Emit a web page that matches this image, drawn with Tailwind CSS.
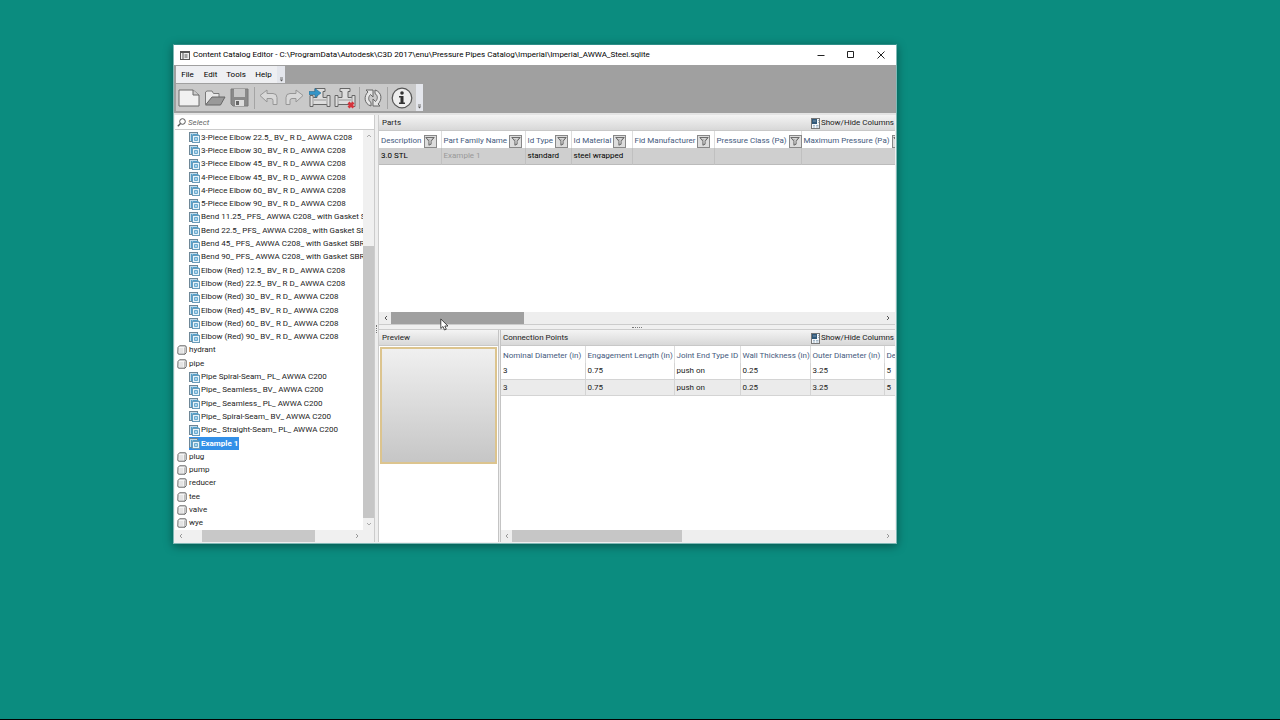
<!DOCTYPE html>
<html lang="en">
<head>
<meta charset="utf-8">
<meta name="viewport" content="width=device-width, initial-scale=1">
<title>Content Catalog Editor</title>
<script src="https://cdn.jsdelivr.net/npm/@tailwindcss/browser@4"></script>
</head>
<body class="relative min-h-screen overflow-hidden border-b border-black bg-[#0b8c7f] font-[Roboto,'Open_Sans',sans-serif] text-[8px] leading-3 text-[#222]">
<svg class="hidden" aria-hidden="true">
  <symbol id="part" viewBox="0 0 11 11"><rect x="0.5" y="0.5" width="8" height="9" fill="#c4dbe9" stroke="#6e8797"/><path d="M2.5 2v7M3.5 2.5h6" stroke="#53a0cb" fill="none"/><rect x="3.5" y="3.5" width="7" height="7" fill="#e8f4fb" stroke="#6a9cba"/><path d="M5.5 5.500h3v3h-3z" fill="#a9d6ee" stroke="#6dabcf"/></symbol>
  <symbol id="cube" viewBox="0 0 10 10"><path d="M1 2.500 2.500.800h5.500q1.200 0 1.200 1.200v5.500L8 9.200H2Q.800 9.200.800 8z" fill="#f5f5f5" stroke="#555" stroke-width=".9"/><path d="M7.500 2.500V9" fill="none" stroke="#888" stroke-width=".5"/><path d="M2.200 3h4v5h-4z" fill="#e4e4e4"/></symbol>
  <symbol id="funnel" viewBox="0 0 10 10"><path d="M.8 1.500h8.400L6.100 5.200v3L3.900 9.200v-4z" fill="#b4b4b4" stroke="#626262" stroke-width=".9"/><path d="M2.500 2.500h4L5 4.500v3" fill="none" stroke="#eee" stroke-width=".6"/></symbol>
  <symbol id="columns" viewBox="0 0 9 11"><rect x=".5" y=".5" width="8" height="10" fill="#f4f7fa" stroke="#777"/><rect x="1" y="1" width="5" height="5" fill="#31597a"/><path d="M2 3h3M2 7.500h2M5 7.500h2.500M2 9h2M5 9h2.500M7 2.500h1M7 4.500h1" stroke="#8aa4ba" stroke-width=".8"/></symbol>
  <symbol id="left" viewBox="0 0 6 6"><path d="M4 1 2 3l2 2" fill="none" stroke="currentColor"/></symbol>
  <symbol id="right" viewBox="0 0 6 6"><path d="m2 1 2 2-2 2" fill="none" stroke="currentColor"/></symbol>
  <symbol id="up" viewBox="0 0 6 6"><path d="m1 4 2-2 2 2" fill="none" stroke="currentColor"/></symbol>
  <symbol id="down" viewBox="0 0 6 6"><path d="m1 2 2 2 2-2" fill="none" stroke="currentColor"/></symbol>
  <symbol id="more" viewBox="0 0 5 5"><path d="M1 1h3" stroke="#555" stroke-width=".8"/><path d="M.8 2.500h3.400L2.500 4.500z" fill="#555"/></symbol>
  <symbol id="tee" viewBox="0 0 22 22"><path d="M6 1.500h10v3h-2v6H18V8.500h3v11h-3v-2H4v2H1v-11h3v2h4v-6H6z" fill="#ddd" stroke="#666"/><path d="M4 10.500v7M18 10.500v7M5 13h12" stroke="#999" fill="none"/></symbol>
</svg>

<main class="absolute left-[173px] top-[44px] flex h-[500px] w-[724px] flex-col border border-[#7fb9b6] border-t-[#2f8e88] bg-white shadow-[0_2px_9px_rgba(0,0,0,0.4)]">
  <header class="flex h-[20px] shrink-0 items-center bg-white pl-[6px]">
    <svg class="h-[9px] w-[10px]" viewBox="0 0 10 9"><rect x=".5" y=".5" width="9" height="8" fill="#eee" stroke="#555"/><path d="M0 1.500h10M3 2v7M4.500 4h3M4.500 6h3" stroke="#555"/></svg>
    <h1 class="ml-[3px] whitespace-nowrap text-black">Content Catalog Editor - C:\ProgramData\Autodesk\C3D 2017\enu\Pressure Pipes Catalog\Imperial\Imperial_AWWA_Steel.sqlite</h1>
    <div class="ml-auto flex h-full">
      <button aria-label="Minimize" class="flex w-[30px] items-center justify-center"><svg class="size-[8px]" viewBox="0 0 8 8"><path d="M.5 4.500h7" stroke="#222"/></svg></button>
      <button aria-label="Maximize" class="flex w-[30px] items-center justify-center"><svg class="size-[8px]" viewBox="0 0 8 8"><path d="M.5 .5h6v6h-6z" fill="none" stroke="#222"/></svg></button>
      <button aria-label="Close" class="flex w-[30px] items-center justify-center"><svg class="size-[8px]" viewBox="0 0 8 8"><path d="m.5.500 7 7m0-7-7 7" stroke="#222"/></svg></button>
    </div>
  </header>

  <div class="flex h-[48px] shrink-0 flex-col items-start gap-[1px] bg-[#a0a0a0] pt-[1px] pl-[2px]">
    <nav class="flex h-[17px] items-center rounded-r-sm bg-[#eeeff2] text-black">
      <button class="w-[23px] pt-[1px]">File</button><button class="w-[23px] pt-[1px]">Edit</button><button class="w-[28px] pt-[1px]">Tools</button><button class="w-[27px] pt-[1px]">Help</button>
      <span class="flex h-full w-[8px] items-end justify-center bg-[#e4e6ec] pb-[1px]"><svg class="size-[5px]"><use href="#more"/></svg></span>
    </nav>
    <div class="flex h-[27px] items-center rounded-r-sm bg-[#c9c9c9] pl-[2px]">
      <button aria-label="New" class="flex w-[26px] justify-start"><svg class="h-[18px] w-[22px]" viewBox="0 0 22 18"><path d="M1 1h14l6 5v11H1z" fill="#f1f1f1" stroke="#6a6a6a"/><path d="M15 1v5h6" fill="#ccc" stroke="#6a6a6a"/></svg></button>
      <button aria-label="Open" class="flex w-[26px] justify-start"><svg class="h-[18px] w-[22px]" viewBox="0 0 22 18"><path d="M1.500 15V3l1.500-1h5l1.500 2.500H15V8" fill="#e8e8e8" stroke="#7a7a7a"/><path d="M1.500 16 8 8h13l-4.500 8z" fill="#999" stroke="#666"/></svg></button>
      <button aria-label="Save" class="flex w-[24px] justify-start"><svg class="h-[19px] w-[19px]" viewBox="0 0 19 19"><path d="M1 1h17v17H3l-2-2z" fill="#8a8a8a" stroke="#7a7a7a"/><path d="M4 1h11v8H4z" fill="#c7c7c7"/><path d="M5 12h9v6H5z" fill="#ddd"/><path d="M6 13h3v4H6z" fill="#666"/></svg></button>
      <span class="mr-[4px] h-[22px] w-px bg-[#a4a4a4]"></span>
      <button aria-label="Undo" class="flex w-[25px] justify-start"><svg class="h-[17px] w-[20px]" viewBox="0 0 20 17"><path d="M1 6.500 8 1v3.500h6q4 0 4 4v7h-4v-4q0-2-2-2H8V13z" fill="#d8d8d8" stroke="#969696"/></svg></button>
      <button aria-label="Redo" class="flex w-[25px] justify-start"><svg class="h-[17px] w-[20px]" viewBox="0 0 20 17"><path d="M19 6.500 12 1v3.500H6q-4 0-4 4v7h4v-4q0-2 2-2h4V13z" fill="#d8d8d8" stroke="#969696"/></svg></button>
      <button aria-label="Add part" class="flex w-[25px] justify-start"><svg class="size-[22px]" viewBox="0 0 22 22"><use href="#tee"/><path d="M0 4.500h6V1.500l6 4.500-6 4.500v-3H0z" fill="#3394c7" stroke="#246b94" stroke-width=".6"/></svg></button>
      <button aria-label="Remove part" class="flex w-[25px] justify-start"><svg class="size-[22px]" viewBox="0 0 22 22"><use href="#tee"/><path d="m14.500 15.500 5 5m0-5-5 5" stroke="#d5343c" stroke-width="2.800"/></svg></button>
      <span class="mr-[3px] h-[22px] w-px bg-[#a4a4a4]"></span>
      <button aria-label="Refresh" class="flex w-[24px] justify-start"><svg class="size-[20px]" viewBox="0 0 20 20"><path d="M8 18C1 16 .5 8 5 4L3 2h7v7L7.500 6.500C5 9 5 12.500 8 14.500z" fill="#e6e6e6" stroke="#666"/><path d="M12 2c7 2 7.500 10 3 14l2 2h-7v-7l2.500 2.500C15 11 15 7.500 12 5.500z" fill="#e6e6e6" stroke="#666"/></svg></button>
      <span class="mr-[3px] h-[22px] w-px bg-[#a4a4a4]"></span>
      <button aria-label="Information" class="flex w-[25px] justify-start"><svg class="size-[22px]" viewBox="0 0 22 22"><circle cx="11" cy="11" r="9.800" fill="#eee" stroke="#555" stroke-width="1.200"/><circle cx="11" cy="6" r="1.800" fill="#333"/><path d="M8 9h4.500v6.500H14V17H8v-1.500h1.500v-5H8z" fill="#333"/></svg></button>
      <span class="flex h-full w-[7px] items-end justify-center bg-[#e4e6ec] pb-[2px]"><svg class="size-[5px]"><use href="#more"/></svg></span>
    </div>
  </div>

  <div class="flex min-h-0 flex-1 border-t-2 border-[#e4e4e4] bg-[#efefef] pr-[1px] pb-[1px]">
    <aside class="flex w-[200px] shrink-0 flex-col pl-[1px]">
      <label class="flex h-[15px] shrink-0 items-center border-b border-[#ccc] bg-white pl-[2px]">
        <svg class="size-[9px]" viewBox="0 0 9 9"><circle cx="5.500" cy="3.500" r="2.800" fill="none" stroke="#555"/><path d="M3.500 5.500.8 8.200" stroke="#555" stroke-width="1.300"/></svg>
        <input type="text" aria-label="Select" placeholder="Select" class="ml-[2px] min-w-0 flex-1 pt-[1px] italic outline-none placeholder:text-[#666]">
      </label>
      <div class="flex min-h-0 flex-1 bg-white">
        <ul id="tree" class="grid min-w-0 flex-1 auto-rows-fr overflow-hidden pt-[1px] whitespace-nowrap text-[#1c1c1c]"></ul>
        <div class="flex w-[11px] flex-col items-center bg-[#f0f0f0] text-[#aaa]">
          <svg class="my-[3px] size-[6px]"><use href="#up"/></svg>
          <div class="mt-[104px] w-full flex-1 bg-[#c6c6c6]"></div>
          <svg class="my-[3px] size-[6px]"><use href="#down"/></svg>
        </div>
      </div>
      <div class="flex h-[12px] shrink-0 items-center bg-[#f0f0f0] text-[#999]">
        <svg class="ml-[3px] size-[6px]"><use href="#left"/></svg>
        <div class="ml-[18px] h-full w-[113px] bg-[#c8c8c8]"></div>
        <svg class="mr-[14px] ml-auto size-[6px]"><use href="#right"/></svg>
      </div>
    </aside>

    <div class="flex w-[5px] shrink-0 items-center border-x border-[#ccc] bg-[#eee] pl-[1px]"><span class="h-[8px] w-px border-l border-dotted border-[#777]"></span></div>

    <div class="flex min-w-0 flex-1 flex-col">
      <section class="flex h-[209px] shrink-0 flex-col bg-white">
        <div class="flex h-[16px] shrink-0 items-center justify-between border-b border-[#c8c8c8] bg-linear-to-b from-[#f4f4f4] to-[#d8d8d8] pt-[1px] pr-[1px] pl-[3px]">
          <h2>Parts</h2>
          <button class="flex items-center whitespace-nowrap"><svg class="mr-[1px] h-[11px] w-[9px]"><use href="#columns"/></svg>Show/Hide Columns</button>
        </div>
        <div class="min-h-0 flex-1 overflow-hidden">
          <table class="w-[560px] table-fixed whitespace-nowrap">
            <colgroup><col class="w-[62px]"><col class="w-[84px]"><col class="w-[46px]"><col class="w-[61px]"><col class="w-[82px]"><col class="w-[87px]"><col></colgroup>
            <thead><tr id="parts-head" class="h-[17px] text-[#44597d]"></tr></thead>
            <tbody><tr id="parts-row" class="h-[16px] border-b border-[#bbb] bg-[#cfcfcf] text-black"></tr></tbody>
          </table>
        </div>
        <div class="flex h-[12px] shrink-0 items-center bg-[#eee] text-[#555]">
          <svg class="ml-[4px] size-[6px]"><use href="#left"/></svg>
          <div class="ml-[2px] h-full w-[133px] bg-[#a0a0a0]"></div>
          <svg class="mr-[4px] ml-auto size-[6px]"><use href="#right"/></svg>
        </div>
      </section>
      <div class="flex h-[6px] shrink-0 items-center justify-center border-y border-[#ccc] bg-[#f0f0f0]"><span class="w-[10px] border-t border-dotted border-[#777]"></span></div>

      <div class="flex min-h-0 flex-1">
        <section class="flex w-[119px] shrink-0 flex-col bg-white">
          <h2 class="flex h-[16px] shrink-0 items-center border-b border-[#c8c8c8] bg-linear-to-b from-[#f4f4f4] to-[#d8d8d8] pt-[1px] pl-[3px]">Preview</h2>
          <div class="mt-px mr-[1px] ml-[1px] h-[117px] border-2 border-[#dcc48e] bg-linear-to-b from-[#f0f0f0] to-[#c6c6c6]"></div>
        </section>
        <div class="w-[3px] shrink-0 border-x border-[#c4c4c4] bg-[#eee]"></div>
        <section class="flex min-w-0 flex-1 flex-col bg-white">
          <div class="flex h-[16px] shrink-0 items-center justify-between border-b border-[#c8c8c8] bg-linear-to-b from-[#f4f4f4] to-[#d8d8d8] pt-[1px] pr-[1px] pl-[2px]">
            <h2>Connection Points</h2>
            <button class="flex items-center whitespace-nowrap"><svg class="mr-[1px] h-[11px] w-[9px]"><use href="#columns"/></svg>Show/Hide Columns</button>
          </div>
          <div class="min-h-0 flex-1 overflow-hidden">
            <table class="w-[434px] table-fixed whitespace-nowrap">
              <colgroup><col class="w-[84px]"><col class="w-[89px]"><col class="w-[66px]"><col class="w-[70px]"><col class="w-[74px]"><col></colgroup>
              <thead><tr id="points-head" class="h-[17px] text-[#44597d]"></tr></thead>
              <tbody id="points-body"></tbody>
            </table>
          </div>
          <div class="flex h-[12px] shrink-0 items-center bg-[#eee] text-[#999]">
            <svg class="ml-[3px] size-[6px]"><use href="#left"/></svg>
            <div class="ml-[2px] h-full w-[170px] bg-[#c6c6c6]"></div>
            <svg class="mr-[4px] ml-auto size-[6px]"><use href="#right"/></svg>
          </div>
        </section>
      </div>
    </div>
  </div>
</main>

<svg class="absolute left-[440px] top-[318px] h-[13px] w-[9px]" viewBox="0 0 9 13"><path d="M.8 1v9.500L3 8.500l1.500 3.500 1.800-.8L4.800 8H8z" fill="#fff" stroke="#222" stroke-width=".8"/></svg>

<script>
const folders = ['hydrant','pipe','plug','pump','reducer','tee','valve','wye'];
const items = ['3-Piece Elbow 22.5_ BV_ R D_ AWWA C208','3-Piece Elbow 30_ BV_ R D_ AWWA C208','3-Piece Elbow 45_ BV_ R D_ AWWA C208','4-Piece Elbow 45_ BV_ R D_ AWWA C208','4-Piece Elbow 60_ BV_ R D_ AWWA C208','5-Piece Elbow 90_ BV_ R D_ AWWA C208','Bend 11.25_ PFS_ AWWA C208_ with Gasket S','Bend 22.5_ PFS_ AWWA C208_ with Gasket SB','Bend 45_ PFS_ AWWA C208_ with Gasket SBR_','Bend 90_ PFS_ AWWA C208_ with Gasket SBR_','Elbow (Red) 12.5_ BV_ R D_ AWWA C208','Elbow (Red) 22.5_ BV_ R D_ AWWA C208','Elbow (Red) 30_ BV_ R D_ AWWA C208','Elbow (Red) 45_ BV_ R D_ AWWA C208','Elbow (Red) 60_ BV_ R D_ AWWA C208','Elbow (Red) 90_ BV_ R D_ AWWA C208','hydrant','pipe','Pipe Spiral-Seam_ PL_ AWWA C200','Pipe_ Seamless_ BV_ AWWA C200','Pipe_ Seamless_ PL_ AWWA C200','Pipe_ Spiral-Seam_ BV_ AWWA C200','Pipe_ Straight-Seam_ PL_ AWWA C200','Example 1','plug','pump','reducer','tee','valve','wye'];
document.getElementById('tree').innerHTML = items.map(t => {
  if (folders.includes(t)) return `<li class="flex items-center pl-[2px]"><svg class="mr-[2px] size-[10px] shrink-0"><use href="#cube"/></svg>${t}</li>`;
  const icon = '<svg class="mr-[1px] size-[11px] shrink-0"><use href="#part"/></svg>';
  if (t === 'Example 1') return `<li class="flex items-center pl-[14px]"><span class="flex h-full items-center bg-[#3390e8] pr-[1px] font-bold text-white">${icon}${t}</span></li>`;
  return `<li class="flex items-center pl-[14px]">${icon}${t}</li>`;
}).join('');
document.getElementById('parts-head').innerHTML = ['Description','Part Family Name','Id Type','Id Material','Fid Manufacturer','Pressure Class (Pa)','Maximum Pressure (Pa)'].map(t =>
  `<th class="border-r border-[#ddd] p-0 pt-[3px] pl-[2px] font-normal"><span class="flex items-center gap-[2px]">${t}<button aria-label="Filter ${t}" class="flex size-[13px] shrink-0 items-center justify-center border border-[#888] bg-[#ddd]"><svg class="size-[10px]"><use href="#funnel"/></svg></button></span></th>`).join('');
document.getElementById('parts-row').innerHTML = ['3.0 STL','<span class="text-[#999]">Example 1</span>','standard','steel wrapped','','',''].map(t => `<td class="border-r border-[#c0c0c0] p-0 pl-[2px]">${t}</td>`).join('');
document.getElementById('points-head').innerHTML = ['Nominal Diameter (in)','Engagement Length (in)','Joint End Type ID','Wall Thickness (in)','Outer Diameter (in)','De'].map(t => `<th class="border-r border-[#ddd] p-0 pt-[3px] pl-[2px] text-left font-normal">${t}</th>`).join('');
document.getElementById('points-body').innerHTML = ['bg-white','bg-[#ebebeb]'].map(c => `<tr class="h-[16px] border-b border-[#d4d4d4] ${c}">` + ['3','0.75','push on','0.25','3.25','5'].map(t => `<td class="border-r border-[#d4d4d4] p-0 pt-[1px] pl-[2px]">${t}</td>`).join('') + '</tr>').join('');
</script>
</body>
</html>
